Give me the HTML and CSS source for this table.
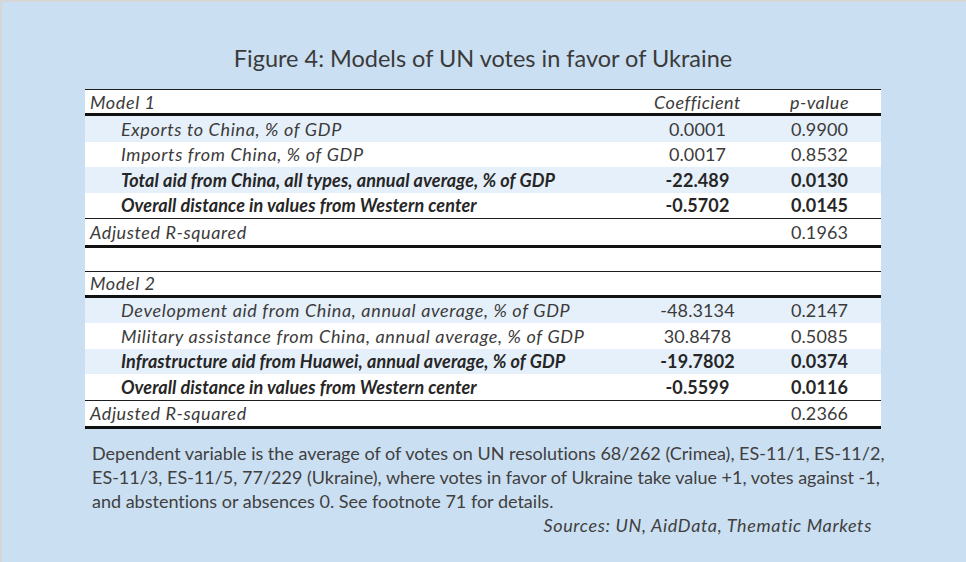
FILE: index.html
```html
<!DOCTYPE html>
<html lang="en">
<head>
<meta charset="utf-8">
<title>Figure 4: Models of UN votes in favor of Ukraine</title>
<link rel="stylesheet" href="styles.css">
</head>
<body>
<div class="frame">
  <h1 class="title">Figure 4: Models of UN votes in favor of Ukraine</h1>
  <table class="models">
    <colgroup>
      <col class="c-label">
      <col class="c-coef">
      <col class="c-p">
    </colgroup>
    <tbody>
      <tr class="head first">
        <td class="model">Model 1</td>
        <td class="num hdr">Coefficient</td>
        <td class="num hdr">p-value</td>
      </tr>
      <tr class="data shade">
        <td class="var">Exports to China, % of GDP</td>
        <td class="num">0.0001</td>
        <td class="num">0.9900</td>
      </tr>
      <tr class="data">
        <td class="var">Imports from China, % of GDP</td>
        <td class="num">0.0017</td>
        <td class="num">0.8532</td>
      </tr>
      <tr class="data shade sig">
        <td class="var">Total aid from China, all types, annual average, % of GDP</td>
        <td class="num">-22.489</td>
        <td class="num">0.0130</td>
      </tr>
      <tr class="data sig lastdata">
        <td class="var">Overall distance in values from Western center</td>
        <td class="num">-0.5702</td>
        <td class="num">0.0145</td>
      </tr>
      <tr class="adj">
        <td class="model">Adjusted R-squared</td>
        <td class="num"></td>
        <td class="num plain">0.1963</td>
      </tr>
      <tr class="spacer">
        <td></td><td></td><td></td>
      </tr>
      <tr class="head">
        <td class="model">Model 2</td>
        <td class="num"></td>
        <td class="num"></td>
      </tr>
      <tr class="data shade">
        <td class="var">Development aid from China, annual average, % of GDP</td>
        <td class="num">-48.3134</td>
        <td class="num">0.2147</td>
      </tr>
      <tr class="data">
        <td class="var">Military assistance from China, annual average, % of GDP</td>
        <td class="num">30.8478</td>
        <td class="num">0.5085</td>
      </tr>
      <tr class="data shade sig">
        <td class="var">Infrastructure aid from Huawei, annual average, % of GDP</td>
        <td class="num">-19.7802</td>
        <td class="num">0.0374</td>
      </tr>
      <tr class="data sig lastdata">
        <td class="var">Overall distance in values from Western center</td>
        <td class="num">-0.5599</td>
        <td class="num">0.0116</td>
      </tr>
      <tr class="adj">
        <td class="model">Adjusted R-squared</td>
        <td class="num"></td>
        <td class="num plain">0.2366</td>
      </tr>
    </tbody>
  </table>
  <p class="note">Dependent variable is the average of of votes on UN resolutions 68/262 (Crimea), ES-11/1, ES-11/2,<br>ES-11/3, ES-11/5, 77/229 (Ukraine), where votes in favor of Ukraine take value +1, votes against -1,<br>and abstentions or absences 0. See footnote 71 for details.</p>
  <p class="sources">Sources: UN, AidData, Thematic Markets</p>
</div>
</body>
</html>
```

FILE: styles.css
```css
html, body {
  margin: 0;
  padding: 0;
}

body {
  font-family: Lato, "Open Sans", "Liberation Sans", sans-serif;
  color: #3b3b3b;
  font-variant-ligatures: none;
}

.frame {
  box-sizing: border-box;
  width: 966px;
  height: 562px;
  background: #cbdff2;
  border-top: 2px solid #d6d6d6;
  border-left: 2px solid #d6d6d6;
  padding: 41px 0 0 83px;
}

.title {
  margin: 0 0 16px 0;
  width: 796px;
  text-align: center;
  font-weight: 400;
  font-size: 23.5px;
  line-height: 30px;
  color: #3a3a3a;
}

.models {
  width: 796px;
  border-collapse: collapse;
  background: #ffffff;
  font-size: 18px;
  letter-spacing: 0.1px;
  font-style: italic;
  border-top: 1.5px solid #1e1e1e;
}

.c-label { width: 552px; }
.c-coef { width: 121px; }
.c-p { width: 123px; }

.models td {
  padding: 0;
  line-height: 20px;
  white-space: nowrap;
}

.head td {
  height: 23px;
  border-bottom: 3px solid #111111;
}

.model {
  padding-left: 5px !important;
  letter-spacing: 0.6px;
}

.hdr {
  font-style: italic;
  letter-spacing: 0.5px;
}

.data td {
  height: 25.5px;
}

.data .num {
  font-style: normal;
}

.var {
  padding-left: 36px !important;
  letter-spacing: 0.65px;
}

.shade td {
  background: #e6f0fa;
}

.sig td {
  font-weight: 700;
  color: #262626;
  letter-spacing: 0.1px;
}

.lastdata td {
  border-bottom: 1.5px solid #1e1e1e;
}

.adj td {
  height: 25.5px;
  border-bottom: 3px solid #111111;
}

.num {
  text-align: center;
}

.plain {
  font-style: normal;
}

.spacer td {
  height: 23px;
  border-bottom: 1.5px solid #1e1e1e;
}

.note {
  margin: 12px 0 0 0;
  padding-left: 7px;
  width: 796px;
  font-size: 18px;
  line-height: 24px;
  color: #404040;
  white-space: nowrap;
}

.sources {
  margin: 0;
  width: 787px;
  text-align: right;
  font-size: 18px;
  line-height: 24px;
  font-style: italic;
  letter-spacing: 0.65px;
  color: #404040;
}
```
